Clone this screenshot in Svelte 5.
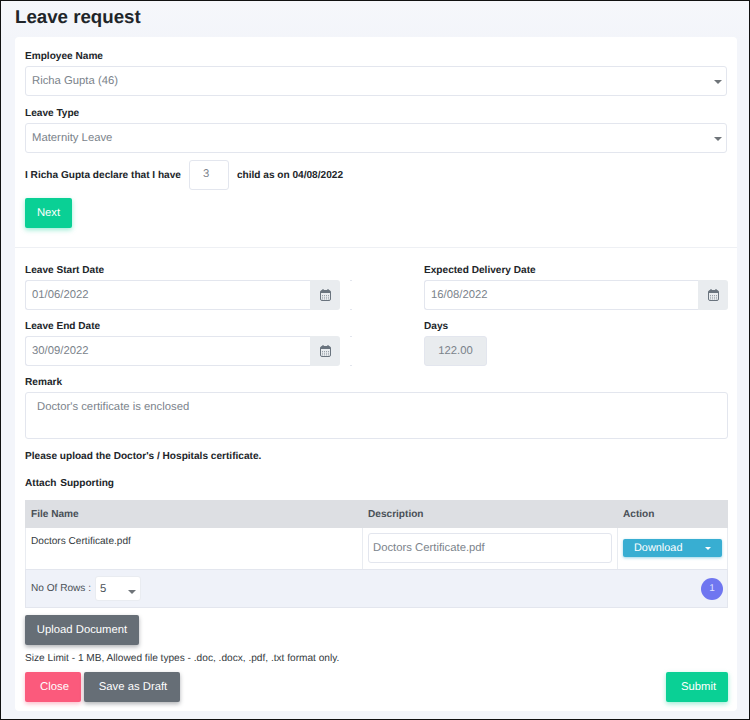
<script>
  const dateRows = [
    { label: 'Leave Start Date', value: '01/06/2022' },
    { label: 'Leave End Date', value: '30/09/2022' }
  ];
</script>

{#snippet calendar()}
  <svg class="cal" width="11" height="12" viewBox="0 0 11 12">
    <rect x="0.5" y="1.5" width="10" height="10" rx="1.5" fill="none" stroke="#6a747e" />
    <rect x="1" y="2" width="9" height="2" fill="#6a747e" />
    <path d="M3 0v2M8 0v2" stroke="#6a747e" stroke-width="1.2" />
    <path d="M2 6.5h7M2 8.2h7M2 9.9h7" stroke="#98a0a8" stroke-dasharray="1 1" />
  </svg>
{/snippet}

<div class="page">
  <h1>Leave request</h1>
  <div class="card">
    <section class="top">
      <div class="label">Employee Name</div>
      <div class="select"><span>Richa Gupta (46)</span><i class="caret"></i></div>
      <div class="label second">Leave Type</div>
      <div class="select"><span>Maternity Leave</span><i class="caret"></i></div>
      <div class="declare">
        <span>I Richa Gupta declare that I have</span>
        <input class="count" value="3" readonly />
        <span>child as on 04/08/2022</span>
      </div>
      <button class="btn green next">Next</button>
    </section>

    <section class="bottom">
      <div class="dates">
        <div class="left">
          {#each dateRows as row}
            <div class="label">{row.label}</div>
            <div class="date-line">
              <div class="date">
                <input value={row.value} readonly />
                <span class="addon">{@render calendar()}</span>
              </div>
              <i class="tick"></i>
            </div>
          {/each}
        </div>
        <div class="right">
          <div class="label">Expected Delivery Date</div>
          <div class="date-line">
            <div class="date">
              <input value="16/08/2022" readonly />
              <span class="addon">{@render calendar()}</span>
            </div>
          </div>
          <div class="label">Days</div>
          <div class="date-line">
            <input class="days" value="122.00" readonly />
          </div>
        </div>
      </div>

      <div class="label">Remark</div>
      <div class="remark">Doctor's certificate is enclosed</div>
      <p class="strong upload-note">Please upload the Doctor's / Hospitals certificate.</p>
      <p class="strong attach">Attach Supporting</p>

      <div class="table">
        <div class="row head">
          <div class="c1">File Name</div>
          <div class="c2">Description</div>
          <div class="c3">Action</div>
        </div>
        <div class="row body">
          <div class="c1">Doctors Certificate.pdf</div>
          <div class="c2"><input value="Doctors Certificate.pdf" readonly /></div>
          <div class="c3">
            <button class="download"><span>Download</span><i class="caret white"></i></button>
          </div>
        </div>
        <div class="foot">
          <span>No Of Rows :</span>
          <div class="rows"><span>5</span><i class="caret"></i></div>
          <span class="pager">1</span>
        </div>
      </div>

      <button class="btn grey upload">Upload Document</button>
      <p class="limit">Size Limit - 1 MB, Allowed file types - .doc, .docx, .pdf, .txt format only.</p>
      <div class="actions">
        <button class="btn pink close">Close</button>
        <button class="btn grey draft">Save as Draft</button>
        <button class="btn green submit">Submit</button>
      </div>
    </section>
  </div>
</div>

<style>
  :global(body) {
    margin: 0;
    background: #f3f5fa;
  }
  .page {
    box-sizing: border-box;
    width: 750px;
    height: 720px;
    padding: 0 12px 0 14px;
    border: 1px solid #111;
    background: linear-gradient(#f6f7fb, #f3f5fa 40px);
    font-family: 'Liberation Sans', Arial, sans-serif;
    font-size: 11.3px;
    color: #495057;
    overflow: hidden;
    text-rendering: geometricPrecision;
  }
  h1 {
    margin: 0;
    height: 36px;
    line-height: 32px;
    font-size: 18.7px;
    font-weight: 700;
    color: #212529;
  }
  .card {
    background: #fff;
    border-radius: 4px;
    height: 674px;
  }
  .top {
    padding: 11px 10px 0;
    height: 199px;
    border-bottom: 1px solid #eef0f4;
  }
  .bottom {
    padding: 14px 9px 0 10px;
  }
  .label {
    height: 14px;
    line-height: 14px;
    padding-top: 2px;
    margin-bottom: 2px;
    font-size: 10.1px;
    font-weight: 700;
    color: #212529;
  }
  .second {
    margin-top: 9px;
  }
  .select {
    box-sizing: border-box;
    height: 30px;
    display: flex;
    align-items: center;
    justify-content: space-between;
    padding: 0 4px 1px 6px;
    border: 1px solid #e3e6ee;
    border-radius: 3px;
    color: #7b838b;
  }
  .caret {
    display: inline-block;
    width: 0;
    height: 0;
    border-left: 4px solid transparent;
    border-right: 4px solid transparent;
    border-top: 4px solid #6f7479;
    margin-top: 2px;
  }
  .caret.white {
    border-left-width: 3px;
    border-right-width: 3px;
    border-top: 3px solid #fff;
    margin-top: 0;
  }
  .declare {
    margin-top: 7px;
    display: flex;
    align-items: center;
    gap: 8px;
    font-size: 10.1px;
    font-weight: 700;
    color: #212529;
  }
  input {
    box-sizing: border-box;
    font: inherit;
    font-size: 11.3px;
    font-weight: 400;
    color: #7b838b;
    outline: none;
    text-rendering: geometricPrecision;
  }
  button {
    text-rendering: geometricPrecision;
  }
  .count {
    width: 40px;
    height: 30px;
    padding: 0 0 2px 13px;
    border: 1px solid #e3e6ee;
    border-radius: 3px;
  }
  .btn {
    height: 30px;
    border: 0;
    border-radius: 2px;
    font: inherit;
    font-size: 11.3px;
    color: #fff;
    padding: 0 0 1px;
  }
  .green {
    background: #0ad095;
    box-shadow: 0 2px 5px rgba(10, 208, 149, 0.4);
  }
  .grey {
    background: #666e76;
    box-shadow: 0 2px 4px rgba(60, 66, 72, 0.4);
  }
  .pink {
    background: #fb5a7c;
    box-shadow: 0 2px 4px rgba(251, 90, 124, 0.4);
  }
  .next {
    display: block;
    margin-top: 8px;
    width: 47px;
  }
  .dates {
    display: grid;
    grid-template-columns: 399px 304px;
  }
  .date-line {
    display: flex;
    height: 30px;
    margin-bottom: 8px;
  }
  .left .date {
    width: 315px;
  }
  .right .date {
    width: 304px;
  }
  .date {
    display: flex;
  }
  .date input {
    flex: 1;
    min-width: 0;
    height: 30px;
    padding: 0 6px 1px;
    border: 1px solid #e3e6ee;
    border-right: 0;
    border-radius: 3px 0 0 3px;
  }
  .addon {
    width: 30px;
    display: flex;
    align-items: center;
    justify-content: center;
    background: #e9ecef;
    border-radius: 0 3px 3px 0;
  }
  .tick {
    box-sizing: border-box;
    width: 2px;
    height: 30px;
    margin-left: 10px;
    border-top: 1px solid #e3e6ee;
    border-bottom: 1px solid #e3e6ee;
  }
  .days {
    width: 63px;
    height: 30px;
    padding: 0;
    text-align: center;
    background: #e9ecef;
    border: 1px solid #e3e6ee;
    border-radius: 3px;
  }
  .remark {
    box-sizing: border-box;
    height: 47px;
    padding: 7px 11px;
    border: 1px solid #e3e6ee;
    border-radius: 3px;
    line-height: 14px;
    color: #7b838b;
  }
  .strong {
    margin: 0;
    height: 14px;
    line-height: 14px;
    font-size: 10.1px;
    font-weight: 700;
    color: #212529;
  }
  .upload-note {
    margin-top: 11px;
  }
  .attach {
    margin-top: 13px;
    word-spacing: 1px;
  }
  .table {
    margin-top: 9px;
    font-size: 10.1px;
  }
  .row {
    display: grid;
    grid-template-columns: 337px 255px 110px;
  }
  .head {
    height: 28px;
    align-items: center;
    padding-left: 1px;
    background: #dddfe3;
    font-weight: 700;
    color: #495057;
  }
  .head > div {
    padding-left: 5px;
  }
  .body {
    height: 41px;
    box-sizing: border-box;
    border-left: 1px solid #e9ecf1;
    border-right: 1px solid #e9ecf1;
    color: #343a40;
  }
  .body > div {
    padding: 5px;
  }
  .body .c1 {
    padding-top: 8px;
    line-height: 12px;
    border-right: 1px solid #e9ecf1;
  }
  .body .c2 {
    border-right: 1px solid #e9ecf1;
    padding-right: 5px;
  }
  .body .c2 input {
    width: 100%;
    height: 30px;
    padding: 0 4px;
    border: 1px solid #e3e6ee;
    border-radius: 3px;
  }
  .body .c3 {
    padding: 11px 0 0 5px;
  }
  .download {
    box-sizing: border-box;
    width: 99px;
    height: 18px;
    display: flex;
    align-items: center;
    justify-content: space-between;
    padding: 0 11px 0 11px;
    border: 0;
    border-radius: 2px;
    background: #38aed2;
    box-shadow: 0 1px 3px rgba(56, 174, 210, 0.5);
    color: #fff;
    font: inherit;
    font-size: 10.9px;
  }
  .foot {
    box-sizing: border-box;
    height: 39px;
    display: flex;
    align-items: center;
    gap: 4px;
    padding: 0 4px 0 5px;
    background: #eff2f9;
    border: 1px solid #e3e6ee;
    color: #495057;
  }
  .rows {
    box-sizing: border-box;
    width: 46px;
    height: 25px;
    display: flex;
    align-items: center;
    justify-content: space-between;
    padding: 0 4px 0 4px;
    background: #fff;
    border-radius: 3px;
    border: 1px solid #e9ecf1;
    font-size: 11.3px;
  }
  .rows .caret {
    margin-top: 6px;
  }
  .pager {
    margin-left: auto;
    width: 22px;
    height: 22px;
    border-radius: 50%;
    background: #6f76f0;
    color: #dfe2ff;
    font-size: 10px;
    line-height: 22px;
    text-align: center;
  }
  .upload {
    display: block;
    margin-top: 7px;
    width: 114px;
  }
  .limit {
    margin: 7px 0 0;
    height: 14px;
    line-height: 14px;
    font-size: 10.15px;
    color: #343a40;
  }
  .actions {
    margin-top: 6px;
    display: flex;
    gap: 3px;
  }
  .close {
    width: 56px;
    padding-left: 3px;
  }
  .draft {
    width: 96px;
    padding-left: 2px;
  }
  .submit {
    margin-left: auto;
    width: 62px;
    padding-left: 3px;
  }
</style>
